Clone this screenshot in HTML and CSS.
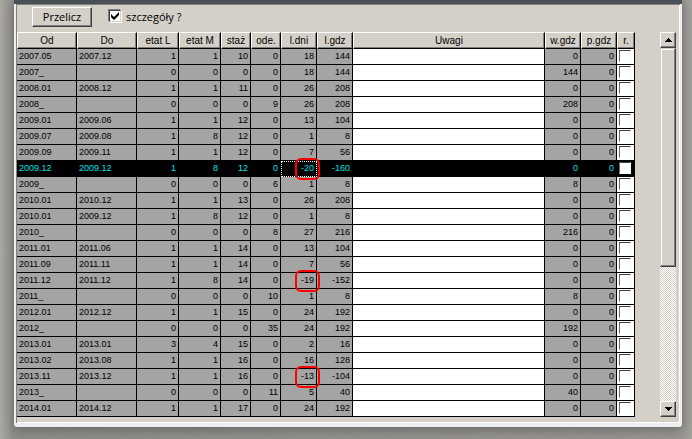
FILE: index.html
```html
<!DOCTYPE html>
<html lang="pl">
<head>
<meta charset="utf-8">
<title>Staż pracy</title>
<link rel="stylesheet" href="styles.css">
</head>
<body>
<main class="window">
<div class="titlebar"></div>
<form class="panel">
<div class="toolbar">
<button class="button" type="button">Przelicz</button>
<label class="option"><input class="check" type="checkbox" checked>szczegóły ?</label>
</div>
<div class="content">
<table class="grid">
<colgroup><col class="date"><col class="date"><col class="etat"><col class="etat"><col class="small"><col class="small"><col class="hours"><col class="hours"><col><col class="hours"><col class="hours"><col class="mark"></colgroup>
<thead>
<tr><th>Od</th><th>Do</th><th>etat L</th><th>etat M</th><th>staż</th><th>ode.</th><th>l.dni</th><th>l.gdz</th><th>Uwagi</th><th>w.gdz</th><th>p.gdz</th><th>r.</th></tr>
</thead>
<tbody>
<tr><td>2007.05<td>2007.12<td>1<td>1<td>10<td>0<td>18<td>144<td><td>0<td>0<td><input type="checkbox" aria-label="r."></tr>
<tr><td>2007_<td><td>0<td>0<td>0<td>0<td>18<td>144<td><td>144<td>0<td><input type="checkbox" aria-label="r."></tr>
<tr><td>2008.01<td>2008.12<td>1<td>1<td>11<td>0<td>26<td>208<td><td>0<td>0<td><input type="checkbox" aria-label="r."></tr>
<tr><td>2008_<td><td>0<td>0<td>0<td>9<td>26<td>208<td><td>208<td>0<td><input type="checkbox" aria-label="r."></tr>
<tr><td>2009.01<td>2009.06<td>1<td>1<td>12<td>0<td>13<td>104<td><td>0<td>0<td><input type="checkbox" aria-label="r."></tr>
<tr><td>2009.07<td>2009.08<td>1<td>8<td>12<td>0<td>1<td>8<td><td>0<td>0<td><input type="checkbox" aria-label="r."></tr>
<tr><td>2009.09<td>2009.11<td>1<td>1<td>12<td>0<td>7<td>56<td><td>0<td>0<td><input type="checkbox" aria-label="r."></tr>
<tr class="selected"><td>2009.12<td>2009.12<td>1<td>8<td>12<td>0<td class="focused circled">-20<td>-160<td><td>0<td>0<td><input type="checkbox" aria-label="r."></tr>
<tr><td>2009_<td><td>0<td>0<td>0<td>6<td>1<td>8<td><td>8<td>0<td><input type="checkbox" aria-label="r."></tr>
<tr><td>2010.01<td>2010.12<td>1<td>1<td>13<td>0<td>26<td>208<td><td>0<td>0<td><input type="checkbox" aria-label="r."></tr>
<tr><td>2010.01<td>2009.12<td>1<td>8<td>12<td>0<td>1<td>8<td><td>0<td>0<td><input type="checkbox" aria-label="r."></tr>
<tr><td>2010_<td><td>0<td>0<td>0<td>8<td>27<td>216<td><td>216<td>0<td><input type="checkbox" aria-label="r."></tr>
<tr><td>2011.01<td>2011.06<td>1<td>1<td>14<td>0<td>13<td>104<td><td>0<td>0<td><input type="checkbox" aria-label="r."></tr>
<tr><td>2011.09<td>2011.11<td>1<td>1<td>14<td>0<td>7<td>56<td><td>0<td>0<td><input type="checkbox" aria-label="r."></tr>
<tr><td>2011.12<td>2011.12<td>1<td>8<td>14<td>0<td class="circled">-19<td>-152<td><td>0<td>0<td><input type="checkbox" aria-label="r."></tr>
<tr><td>2011_<td><td>0<td>0<td>0<td>10<td>1<td>8<td><td>8<td>0<td><input type="checkbox" aria-label="r."></tr>
<tr><td>2012.01<td>2012.12<td>1<td>1<td>15<td>0<td>24<td>192<td><td>0<td>0<td><input type="checkbox" aria-label="r."></tr>
<tr><td>2012_<td><td>0<td>0<td>0<td>35<td>24<td>192<td><td>192<td>0<td><input type="checkbox" aria-label="r."></tr>
<tr><td>2013.01<td>2013.01<td>3<td>4<td>15<td>0<td>2<td>16<td><td>0<td>0<td><input type="checkbox" aria-label="r."></tr>
<tr><td>2013.02<td>2013.08<td>1<td>1<td>16<td>0<td>16<td>128<td><td>0<td>0<td><input type="checkbox" aria-label="r."></tr>
<tr><td>2013.11<td>2013.12<td>1<td>1<td>16<td>0<td class="circled">-13<td>-104<td><td>0<td>0<td><input type="checkbox" aria-label="r."></tr>
<tr><td>2013_<td><td>0<td>0<td>0<td>11<td>5<td>40<td><td>40<td>0<td><input type="checkbox" aria-label="r."></tr>
<tr><td>2014.01<td>2014.12<td>1<td>1<td>17<td>0<td>24<td>192<td><td>0<td>0<td><input type="checkbox" aria-label="r."></tr>
</tbody>
</table>
<div class="scrollbar">
<button class="arrow" type="button" aria-label="W górę"><svg width="7" height="4" viewBox="0 0 7 4" shape-rendering="crispEdges"><path d="M3 0h1v1h1v1h1v1h1v1H0V3h1V2h1V1h1z"/></svg></button>
<div class="track"><div class="thumb"></div></div>
<button class="arrow" type="button" aria-label="W dół"><svg width="7" height="4" viewBox="0 0 7 4" shape-rendering="crispEdges"><path d="M0 0h7v1H6v1H5v1H4v1H3V3H2V2H1V1H0z"/></svg></button>
</div>
</div>
</form>
</main>
</body>
</html>
```
FILE: styles.css
```css
*,
*::after {
  box-sizing: border-box;
}

body {
  margin: 0;
  min-height: 100vh;
  background: linear-gradient(90deg, #aaa8a2, #8e8d89 14px, #999692 calc(100% - 10px), #a3a29b);
  font: 9px/15px "Liberation Sans", Arial, sans-serif;
  color: #000;
  overflow: hidden;
}

.window {
  margin: 0 10px 12px 14px;
  border-radius: 0 0 3px 3px;
  box-shadow: 0 3px 12px rgba(60, 60, 60, 0.5);
}

.titlebar {
  height: 4px;
  background: #485056;
}

.panel {
  padding: 2px 1px 1px;
  background: #d4d0c8;
  border: solid #eceef0;
  border-width: 0 2px 4px;
  border-radius: 0 0 3px 3px;
  box-shadow: inset 1px 1px #808080, inset -1px -1px #fff;
}

.toolbar {
  display: flex;
  gap: 17px;
  padding: 1px 15px 5px;
  font: 11px/14px "Open Sans", Tahoma, sans-serif;
}

.button {
  width: 60px;
  height: 20px;
  padding: 0;
  font: inherit;
  color: #000;
  background: #d4d0c8;
  border: 1px solid;
  border-color: #fff #404040 #404040 #fff;
  box-shadow: inset -1px -1px #808080;
}

.option {
  display: flex;
  align-items: center;
  gap: 5px;
}

.check {
  appearance: none;
  width: 12px;
  height: 12px;
  margin: 0 0 2px;
  border: 1px solid;
  border-color: #404040 #d4d0c8 #d4d0c8 #404040;
  box-shadow: -1px -1px #808080, 1px 1px #fff;
  background: #fff;
}

.check:checked {
  background: #fff url("data:image/svg+xml,%3Csvg xmlns='http://www.w3.org/2000/svg' viewBox='0 0 10 10'%3E%3Cpath d='M1 3v3l3 3 5-5V1L4 6z'/%3E%3C/svg%3E") center / 10px no-repeat;
}

.content {
  display: flex;
  justify-content: space-between;
  gap: 25px;
  padding: 0 3px 5px 0;
}

.grid {
  flex: 1;
  min-width: 0;
  table-layout: fixed;
  border-collapse: separate;
  border-spacing: 0;
}

.date { width: 60px; }
.etat { width: 42px; }
.small { width: 30px; }
.hours { width: 36px; }
.mark { width: 18px; }

th {
  height: 17px;
  padding: 0;
  font-size: 10px;
  font-weight: 400;
  line-height: 14px;
  background: #d4d0c8;
  border: 1px solid;
  border-color: #fff #000 #000 #fff;
  box-shadow: inset -1px -1px #808080;
}

td {
  height: 16px;
  padding: 0 2px;
  line-height: 15px;
  text-align: right;
  white-space: nowrap;
  background: #a4a4a4;
  border: solid #000;
  border-width: 0 1px 1px 0;
}

td:nth-child(-n+2) {
  text-align: left;
}

td:nth-child(9),
td:nth-child(12) {
  background: #fff;
}

td:nth-child(12) {
  padding: 1px 2px;
  vertical-align: top;
}

td input {
  appearance: none;
  display: block;
  width: 12px;
  height: 12px;
  margin: 0;
  background: #fff;
  border: 1px solid;
  border-color: #404040 #fffbd8 #fff #706080;
}

.selected td,
.selected td:nth-child(9),
.selected td:nth-child(12) {
  color: #00e0e8;
  background: #000;
}

.circled {
  position: relative;
}

.circled::after {
  content: "";
  position: absolute;
  top: -3px;
  right: -4px;
  width: 25px;
  height: 22px;
  border: 2px solid #f00;
  border-radius: 6px;
}

.focused {
  outline: 1px dotted #fff;
  outline-offset: -1px;
}

.scrollbar {
  display: flex;
  flex-direction: column;
  width: 16px;
}

.arrow {
  display: grid;
  place-items: center;
  height: 16px;
  padding: 0;
  background: #d4d0c8;
  border: 1px solid;
  border-color: #fff #404040 #404040 #fff;
  box-shadow: inset -1px -1px #808080;
}

.track {
  flex: 1;
  background: repeating-conic-gradient(#fff 0 25%, #d4d0c8 0 50%) 0 0 / 2px 2px;
}

.thumb {
  height: 62%;
  background: #d4d0c8;
  border: 1px solid;
  border-color: #d4d0c8 #404040 #404040 #d4d0c8;
  box-shadow: inset -1px -1px #808080, inset 1px 1px #fff;
}
```
